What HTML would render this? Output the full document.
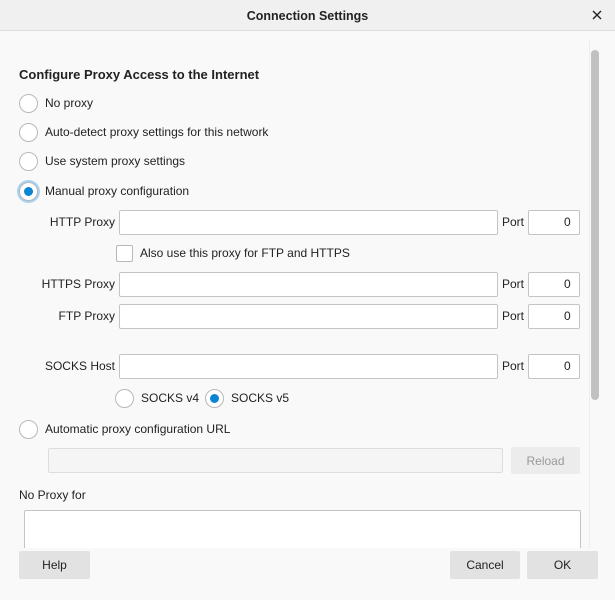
<!DOCTYPE html>
<html><head><style>
*{box-sizing:border-box;margin:0;padding:0}
body{width:615px;height:600px;background:#f9f9f9;font-family:"Liberation Sans",sans-serif;font-size:12px;color:#222;position:relative;overflow:hidden}
.a{position:absolute}
.t{position:absolute;line-height:16px;white-space:nowrap}
.r{position:absolute;width:19px;height:19px;border:1px solid #b8b8b8;border-radius:50%;background:#fff}
.r.on::after{content:"";position:absolute;left:4px;top:4px;width:9px;height:9px;border-radius:50%;background:#0a84d4}
.in{position:absolute;background:#fff;border:1px solid #c4c4c4;border-radius:2px}
.btn{position:absolute;background:#e2e2e2;border-radius:2px;text-align:center;line-height:28px;font-size:12px}
.lbl{position:absolute;text-align:right;width:110px;left:5px;line-height:16px}
</style></head><body>
<div class="a" style="left:0;top:0;width:615px;height:31px;background:#f0f0f0;border-bottom:1px solid #ddd"></div>
<div class="t" style="left:0;width:615px;text-align:center;top:8px;font-weight:bold;font-size:12.5px">Connection Settings</div>
<svg class="a" style="left:592px;top:10px" width="10" height="10" viewBox="0 0 10 10"><path d="M1 1L9 9M9 1L1 9" stroke="#222" stroke-width="1.4"/></svg>
<div class="a" style="left:591px;top:50px;width:8px;height:350px;background:#c1c1c1;border-radius:4px"></div>
<div class="a" style="left:589px;top:40px;width:1px;height:508px;background:#eee"></div>

<div class="t" style="left:19px;top:67px;font-weight:bold;font-size:13px">Configure Proxy Access to the Internet</div>
<div class="r" style="left:19px;top:94px"></div><div class="t" style="left:45px;top:95px">No proxy</div>
<div class="r" style="left:19px;top:123px"></div><div class="t" style="left:45px;top:124px">Auto-detect proxy settings for this network</div>
<div class="r" style="left:19px;top:152px"></div><div class="t" style="left:45px;top:153px">Use system proxy settings</div>
<div class="r on" style="left:19px;top:182px;box-shadow:0 0 0 2px #a9d2f0"></div><div class="t" style="left:45px;top:183px">Manual proxy configuration</div>

<div class="lbl" style="top:214px">HTTP Proxy</div>
<div class="in" style="left:119px;top:210px;width:379px;height:25px"></div>
<div class="t" style="left:502px;top:214px">Port</div>
<div class="in" style="left:528px;top:210px;width:52px;height:25px"></div><div class="t" style="left:564px;top:214px">0</div>

<div class="a" style="left:116px;top:245px;width:17px;height:17px;border:1px solid #b8b8b8;background:#fff;border-radius:2px"></div>
<div class="t" style="left:140px;top:245px">Also use this proxy for FTP and HTTPS</div>

<div class="lbl" style="top:276px">HTTPS Proxy</div>
<div class="in" style="left:119px;top:272px;width:379px;height:25px"></div>
<div class="t" style="left:502px;top:276px">Port</div>
<div class="in" style="left:528px;top:272px;width:52px;height:25px"></div><div class="t" style="left:564px;top:276px">0</div>

<div class="lbl" style="top:308px">FTP Proxy</div>
<div class="in" style="left:119px;top:304px;width:379px;height:25px"></div>
<div class="t" style="left:502px;top:308px">Port</div>
<div class="in" style="left:528px;top:304px;width:52px;height:25px"></div><div class="t" style="left:564px;top:308px">0</div>

<div class="lbl" style="top:358px">SOCKS Host</div>
<div class="in" style="left:119px;top:354px;width:379px;height:25px"></div>
<div class="t" style="left:502px;top:358px">Port</div>
<div class="in" style="left:528px;top:354px;width:52px;height:25px"></div><div class="t" style="left:564px;top:358px">0</div>

<div class="r" style="left:115px;top:389px"></div><div class="t" style="left:141px;top:390px">SOCKS v4</div>
<div class="r on" style="left:205px;top:389px"></div><div class="t" style="left:231px;top:390px">SOCKS v5</div>

<div class="r" style="left:19px;top:420px"></div><div class="t" style="left:45px;top:421px">Automatic proxy configuration URL</div>
<div class="in" style="left:48px;top:448px;width:455px;height:25px;background:#f5f5f5;border-color:#ddd"></div>
<div class="btn" style="left:511px;top:447px;width:69px;height:27px;background:#ececec;color:#999">Reload</div>

<div class="t" style="left:19px;top:487px">No Proxy for</div>
<div class="in" style="left:24px;top:510px;width:557px;height:50px"></div>
<div class="a" style="left:0;top:548px;width:589px;height:52px;background:#f9f9f9"></div>
<div class="btn" style="left:19px;top:551px;width:71px;height:28px">Help</div>
<div class="btn" style="left:450px;top:551px;width:70px;height:28px">Cancel</div>
<div class="btn" style="left:527px;top:551px;width:71px;height:28px">OK</div>
</body></html>
